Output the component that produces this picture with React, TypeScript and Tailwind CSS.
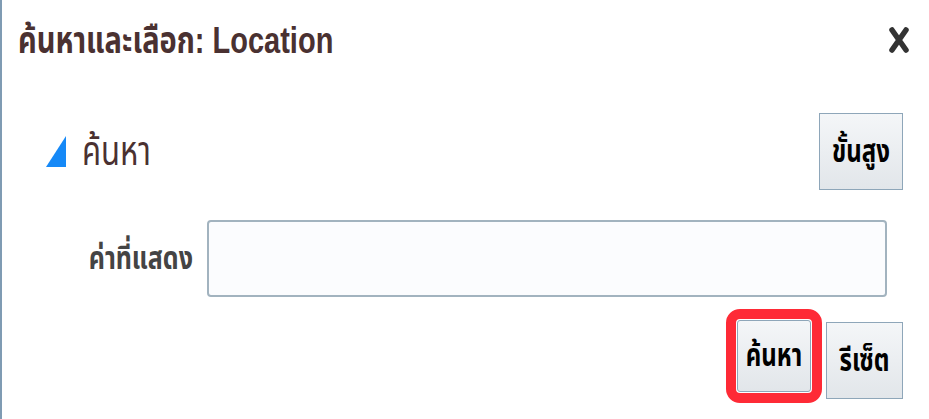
import React from 'react';

const thai = "font-['Liberation_Sans','Noto_Sans_Thai','Noto_Sans',sans-serif]";

function CloseIcon() {
  return (
    <svg width="24" height="30" viewBox="0 0 24 30" aria-hidden="true">
      <path d="M5 5 L19 25 M19 5 L5 25" stroke="#333" strokeWidth="5.5" strokeLinecap="round" />
    </svg>
  );
}

function Triangle() {
  return (
    <svg width="22" height="33" viewBox="0 0 22 33" aria-hidden="true">
      <polygon points="21,1 21,32 1,32" fill="#1689f7" />
    </svg>
  );
}

// text in the capture is stretched vertically
function Tall({ children, className = '' }: { children: React.ReactNode; className?: string }) {
  return <span className={`inline-block origin-center scale-y-[1.3] ${className}`}>{children}</span>;
}

function ToolButton({ children, className = '' }: { children: React.ReactNode; className?: string }) {
  return (
    <button
      className={`flex items-center justify-center border border-[#8ea6b9] bg-gradient-to-b from-[#f4f6f8] to-[#e2e6ea] text-[24px] font-bold text-black ${className}`}
    >
      <Tall>{children}</Tall>
    </button>
  );
}

export default function App() {
  return (
    <div className={`flex h-[419px] w-[929px] flex-col overflow-hidden border-l-2 border-[#7f9bb3] bg-white ${thai}`}>
      {/* Header */}
      <div className="flex h-[80px] items-center justify-between pl-[16px] pr-[18px]">
        <h1 className="text-[29px] font-bold leading-none text-[#4a3131]">
          <Tall>ค้นหาและเลือก: Location</Tall>
        </h1>
        <CloseIcon />
      </div>

      {/* Search section */}
      <div className="mt-[33px] flex items-center justify-between pl-[43px] pr-[26px]">
        <div className="flex items-center gap-[15px]">
          <Triangle />
          <span className="text-[31px] leading-none text-[#4a3131]">
            <Tall>ค้นหา</Tall>
          </span>
        </div>
        <ToolButton className="h-[77px] w-[84px]">ขั้นสูง</ToolButton>
      </div>

      <div className="mt-[30px] flex items-center pr-[42px]">
        <label className="w-[205px] pr-[14px] text-right text-[25px] font-bold text-[#444]">
          <Tall>ค่าที่แสดง</Tall>
        </label>
        <div className="h-[77px] flex-1 rounded-[4px] border-2 border-[#a2b3bf] bg-[#fbfcfe]" />
      </div>

      <div className="mt-[12px] flex items-start justify-end gap-[4px] pr-[26px]">
        <div className="rounded-[14px] border-[10px] border-[#fe2a36] p-[1px]">
          <ToolButton className="h-[72px] w-[74px] rounded-[3px]">ค้นหา</ToolButton>
        </div>
        <ToolButton className="mt-[13px] h-[77px] w-[77px]">รีเซ็ต</ToolButton>
      </div>
    </div>
  );
}
